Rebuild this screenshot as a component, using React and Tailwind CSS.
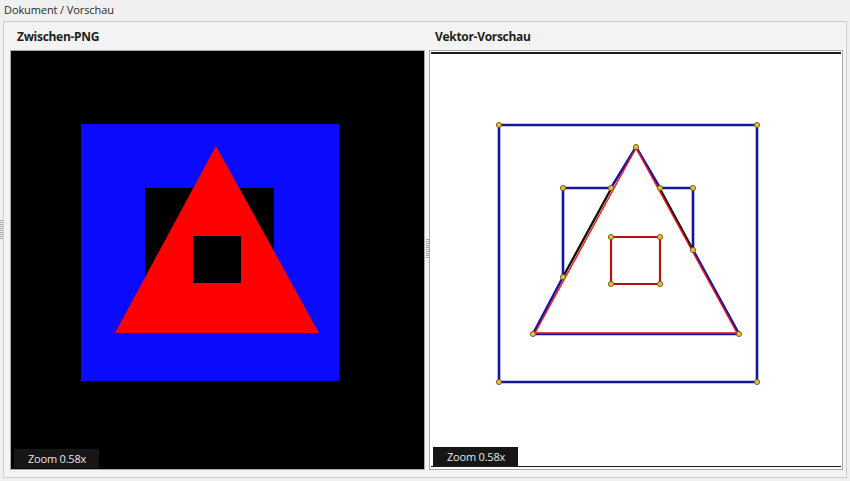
import React from 'react';

const BLUE = '#16169c';

// traced contour vertices, in page pixels
const outerSquare = [[499, 125], [757, 125], [757, 382], [499, 382]];
const holeOutline = [
  [563, 188], [611, 188], [636, 147], [660, 188], [693, 188],
  [693, 250], [739, 334], [533, 334], [563, 277],
];
const redSquare = [[611, 237], [660, 237], [660, 284], [611, 284]];

const pts = (list) => list.map(([x, y]) => `${x},${y}`).join(' ');

const ZoomBadge = ({ className }) => (
  <div className={`absolute h-[19px] w-[85px] bg-[#161616] text-[#e6e6e6] text-[11px] leading-[19px] tracking-[-0.2px] pl-[14px] ${className}`}>
    Zoom 0.58x
  </div>
);

const RasterCanvas = () => (
  <div className="relative w-[415px] h-[420px] border border-[#a9a9a9] bg-black">
    <svg width="413" height="418" viewBox="11 51 413 418" className="block">
      <rect x="81" y="124" width="258" height="257" fill="#0a0aff" />
      <rect x="145" y="188" width="129" height="129" fill="#000" />
      <polygon points="216,146 115,333 319,333" fill="#ff0000" />
      <rect x="193" y="236" width="48" height="47" fill="#000" />
    </svg>
    <ZoomBadge className="left-[3px] bottom-[1px]" />
  </div>
);

const VectorCanvas = () => {
  const dots = [...outerSquare, ...holeOutline, ...redSquare];
  return (
    <div className="w-[414px] h-[420px] border border-[#a9a9a9] bg-white pt-[1px] px-[1px] pb-[2px] flex flex-col">
      <div className="relative flex-1 border-t-2 border-b border-[#1c1c1c]">
        <svg width="410" height="412" viewBox="431 54 410 412" className="block">
          <polygon points={pts(outerSquare)} fill="none" stroke={BLUE} strokeWidth="2.6" />
          <polygon points={pts(holeOutline)} fill="none" stroke={BLUE} strokeWidth="2.6" />
          {/* black region edges running along the triangle */}
          <polyline points="611,189 563,277" fill="none" stroke="#111" strokeWidth="2.4" />
          <polyline points="660,189 693,250" fill="none" stroke="#111" strokeWidth="2.4" />
          <polygon points="636,148 535,333 737,333" fill="none" stroke="#f01818" strokeWidth="1.4" />
          <polygon points={pts(redSquare)} fill="none" stroke="#b31212" strokeWidth="2.2" />
          {dots.map(([x, y], i) => (
            <circle key={i} cx={x} cy={y} r="2.6" fill="#e6bd3a" stroke="#6b5a20" strokeWidth="0.9" />
          ))}
        </svg>
        <ZoomBadge className="left-[2px] bottom-0" />
      </div>
    </div>
  );
};

const Grip = ({ className }) => (
  <div className={`flex flex-col gap-[1px] ${className}`}>
    {Array.from({ length: 10 }).map((_, i) => (
      <div key={i} className="h-[1px] bg-[#a8a8a8]" />
    ))}
  </div>
);

export default function App() {
  return (
    <div
      className="relative w-[850px] h-[481px] overflow-hidden bg-[#f0f0f0] text-[#1e1e1e]"
      style={{ fontFamily: '"Open Sans", "Noto Sans", sans-serif' }}
    >
      <div className="h-[21px] pl-[4px] text-[11px] leading-[20px] tracking-[-0.1px] text-[#2a2a2a]">Dokument / Vorschau</div>

      <div className="ml-[3px] w-[844px] h-[457px] border border-[#cdcdcd] bg-[#f3f3f3] flex pl-[6px] pr-[3px] pb-[7px]">
        <div className="flex flex-col">
          <div className="h-[28px] pl-[7px] text-[12px] font-bold leading-[29px] tracking-[-0.3px]">Zwischen-PNG</div>
          <RasterCanvas />
        </div>

        <div className="w-[4px] flex items-start pt-[217px]">
          <Grip className="w-[3px] ml-[1px]" />
        </div>

        <div className="flex flex-col">
          <div className="h-[28px] pl-[6px] text-[12px] font-bold leading-[29px] tracking-[-0.3px]">Vektor-Vorschau</div>
          <VectorCanvas />
        </div>
      </div>

      <Grip className="absolute left-0 top-[220px] w-[3px]" />
    </div>
  );
}
